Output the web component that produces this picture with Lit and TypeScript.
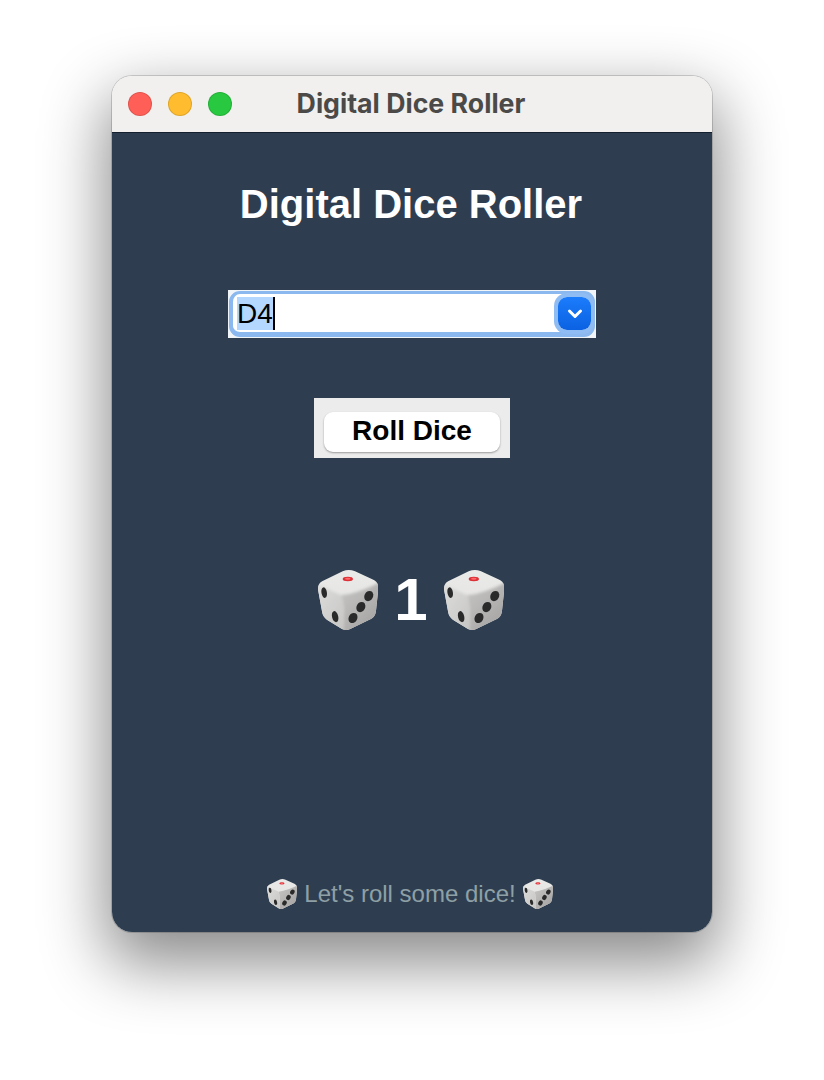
import { LitElement, html, css, svg } from "lit";
import { customElement } from "lit/decorators.js";

let dieId = 0;
function die(cls: string) {
  const id = `d${dieId++}`;
  return html`<svg class=${cls} viewBox="40 30 175 175" aria-hidden="true">
    ${svg`<defs>
      <linearGradient id="${id}t" x1="0" y1="0" x2="0" y2="1"><stop offset="0" stop-color="#eaeae9"/><stop offset="1" stop-color="#e2e1e0"/></linearGradient>
      <linearGradient id="${id}l" x1="0" y1="0" x2="1" y2="1"><stop offset="0" stop-color="#dededd"/><stop offset="1" stop-color="#c6c5c4"/></linearGradient>
      <linearGradient id="${id}r" x1="0" y1="0" x2="0.8" y2="1"><stop offset="0" stop-color="#c8c7c6"/><stop offset="1" stop-color="#a2a1a0"/></linearGradient>
      <filter id="${id}b" x="-10%" y="-10%" width="120%" height="120%"><feGaussianBlur stdDeviation="4"/></filter>
      <clipPath id="${id}c"><path d="M112 34Q130 26 148 34L200 58Q217 66 216 84L209 150Q207 166 194 173L134 202Q122 208 110 202L66 175Q54 167 52 152L41 92Q37 72 52 63Z"/></clipPath>
    </defs>
    <g clip-path="url(#${id}c)">
      <rect x="30" y="20" width="195" height="195" fill="url(#${id}t)"/>
      <g filter="url(#${id}b)">
        <path d="M30 66Q80 92 108 104Q118 140 114 215L45 185Z" fill="url(#${id}l)"/>
        <path d="M108 104Q160 98 228 62L226 185L114 215Q120 140 108 104Z" fill="url(#${id}r)"/>
      </g>
    </g>
    <ellipse cx="127" cy="56" rx="15" ry="6.5" fill="#dd3037"/>
    <ellipse cx="127" cy="55.5" rx="8" ry="3" fill="#ff6a6a"/>
    <ellipse cx="58" cy="96" rx="8" ry="15.5" transform="rotate(-10 58 96)" fill="#2a2a2a"/>
    <ellipse cx="90" cy="166" rx="9" ry="16.5" transform="rotate(-14 90 166)" fill="#2a2a2a"/>
    <ellipse cx="188" cy="106" rx="12.5" ry="15.5" transform="rotate(28 188 106)" fill="#2a2a2a"/>
    <ellipse cx="165" cy="138" rx="12.5" ry="15.5" transform="rotate(28 165 138)" fill="#2a2a2a"/>
    <ellipse cx="142" cy="170" rx="12.5" ry="15.5" transform="rotate(28 142 170)" fill="#2a2a2a"/>`}
  </svg>`;
}

@customElement("app-root")
export class AppRoot extends LitElement {
  static styles = css`
    :host {
      display: block;
      height: 1080px;
      box-sizing: border-box;
      padding: 76px 112px 148px;
      background: #fff;
      font-family: "Liberation Sans", Arial, sans-serif;
    }
    .shadow {
      height: 856px;
      border-radius: 20px;
      box-shadow: 0 26px 64px 6px rgba(0, 0, 0, 0.46);
    }
    .window {
      height: 856px;
      border-radius: 20px;
      display: flex;
      flex-direction: column;
      overflow: hidden;
      box-shadow: 0 0 0 1px rgba(0, 0, 0, 0.16);
    }
    .titlebar {
      height: 56px;
      flex: none;
      background: #f1f0ee;
      border-bottom: 1px solid #14202e;
      display: grid;
      grid-template-columns: 1fr auto 1fr;
      align-items: center;
      padding: 0 16px;
    }
    .lights {
      display: flex;
      gap: 16px;
    }
    .light {
      width: 24px;
      height: 24px;
      box-sizing: border-box;
      border-radius: 50%;
      border: 1px solid rgba(0, 0, 0, 0.12);
    }
    .red { background: #ff5f57; }
    .yellow { background: #febc2e; }
    .green { background: #28c840; }
    .wintitle {
      font-family: "Inter", "Open Sans", sans-serif;
      font-weight: 700;
      font-size: 26.7px;
      line-height: 32px;
      color: #4b4a48;
      margin: -3px 2px 0 0;
    }
    .content {
      flex: 1;
      min-height: 0;
      background: #2e3e50;
      display: flex;
      flex-direction: column;
      align-items: center;
    }
    h1 {
      margin: 48px 2px 0 0;
      font-size: 40px;
      line-height: 46px;
      font-weight: 700;
      color: #fff;
      text-align: center;
    }
    .select {
      margin-top: 63px;
      width: 368px;
      height: 48px;
      box-sizing: border-box;
      background: #f2f5f8;
      padding: 1px;
      display: flex;
    }
    .field {
      flex: 1;
      position: relative;
      border-radius: 11px;
      border-style: solid;
      border-color: #8ab8ef;
      border-width: 3px 4px 5px;
      background: #fff;
      display: flex;
      align-items: flex-start;
      padding: 3px 0 0 4px;
      font-size: 28px;
      color: #000;
    }
    .sel {
      background: #b3d7ff;
      line-height: 33px;
      height: 33px;
    }
    .caret {
      width: 2px;
      height: 33px;
      background: #000;
    }
    .arrow {
      position: absolute;
      right: 0;
      top: 3px;
      width: 33px;
      height: 33px;
      border-radius: 9px;
      background: linear-gradient(#1b7cfb, #0b62e2);
      box-shadow: 0 0 0 4px #8fbcf2;
      display: flex;
      align-items: center;
      justify-content: center;
    }
    .arrow svg {
      width: 16px;
      height: 12px;
    }
    .btnwrap {
      margin-top: 60px;
      width: 196px;
      height: 60px;
      box-sizing: border-box;
      padding-top: 8px;
      background: #ececec;
      display: flex;
      align-items: center;
      justify-content: center;
    }
    button {
      width: 176px;
      height: 40px;
      padding: 0 0 2px;
      border: none;
      border-radius: 9px;
      background: #fff;
      box-shadow: 0 1px 2px rgba(0, 0, 0, 0.35);
      font: 700 28px "Liberation Sans", Arial, sans-serif;
      color: #000;
    }
    .result {
      margin: 104px 2px 0 0;
      display: flex;
      align-items: center;
      gap: 16px;
      color: #fff;
      font-size: 60px;
      line-height: 76px;
      font-weight: 700;
    }
    .big {
      width: 60px;
      height: 60px;
    }
    .footer {
      margin: auto 4px 22px 0;
      display: flex;
      align-items: center;
      gap: 7.5px;
      font-size: 24px;
      line-height: 32px;
      color: #8ea0a6;
    }
    .small {
      width: 30px;
      height: 30px;
    }
  `;

  render() {
    return html`<div class="shadow">
      <div class="window">
        <div class="titlebar">
          <div class="lights">
            <span class="light red"></span>
            <span class="light yellow"></span>
            <span class="light green"></span>
          </div>
          <div class="wintitle">Digital Dice Roller</div>
          <div></div>
        </div>
        <div class="content">
          <h1>Digital Dice Roller</h1>
          <div class="select">
            <div class="field">
              <span class="sel">D4</span><span class="caret"></span>
              <span class="arrow">
                <svg viewBox="0 0 16 12"><path d="M2.5 3 8 8.5 13.5 3" fill="none" stroke="#fff" stroke-width="3" stroke-linecap="round" stroke-linejoin="round"/></svg>
              </span>
            </div>
          </div>
          <div class="btnwrap"><button>Roll Dice</button></div>
          <div class="result">${die("big")}<span>1</span>${die("big")}</div>
          <div class="footer">${die("small")}<span>Let's roll some dice!</span>${die("small")}</div>
        </div>
      </div>
    </div>`;
  }
}
